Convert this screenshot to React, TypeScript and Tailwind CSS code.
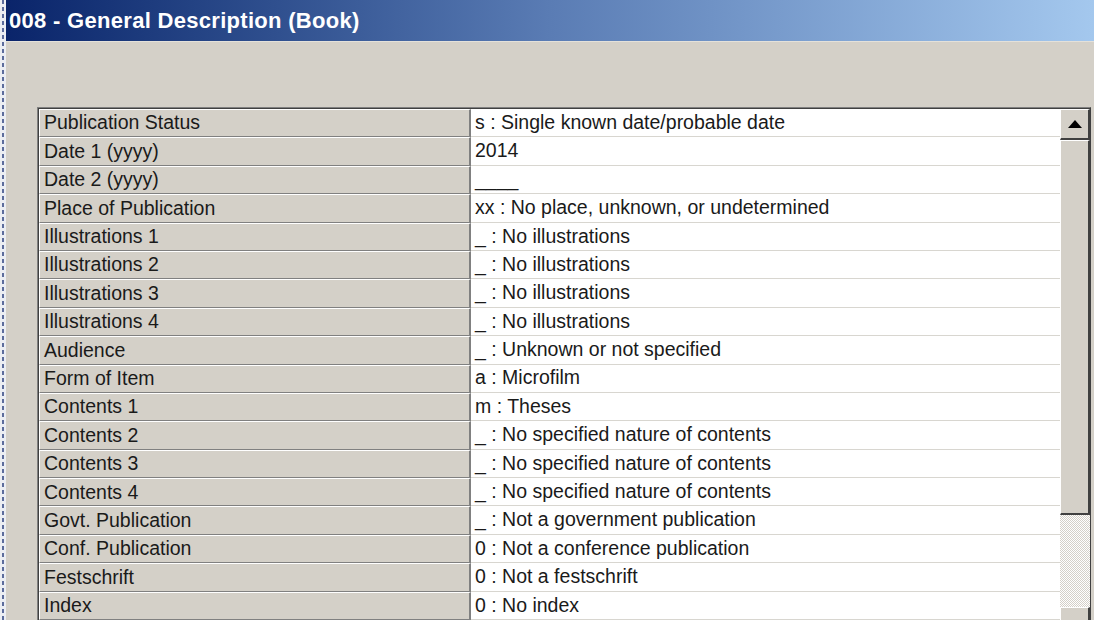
import React from "react";

const rows: [string, string][] = [
  ["Publication Status", "s : Single known date/probable date"],
  ["Date 1 (yyyy)", "2014"],
  ["Date 2 (yyyy)", "____"],
  ["Place of Publication", "xx : No place, unknown, or undetermined"],
  ["Illustrations 1", "_ : No illustrations"],
  ["Illustrations 2", "_ : No illustrations"],
  ["Illustrations 3", "_ : No illustrations"],
  ["Illustrations 4", "_ : No illustrations"],
  ["Audience", "_ : Unknown or not specified"],
  ["Form of Item", "a : Microfilm"],
  ["Contents 1", "m : Theses"],
  ["Contents 2", "_ : No specified nature of contents"],
  ["Contents 3", "_ : No specified nature of contents"],
  ["Contents 4", "_ : No specified nature of contents"],
  ["Govt. Publication", "_ : Not a government publication"],
  ["Conf. Publication", "0 : Not a conference publication"],
  ["Festschrift", "0 : Not a festschrift"],
  ["Index", "0 : No index"],
];

const Arrow = ({ up }: { up?: boolean }) => (
  <svg width="14" height="8" viewBox="0 0 14 8">
    <path d={up ? "M7 0 L14 8 L0 8 Z" : "M0 0 L14 0 L7 8 Z"} fill="#000" />
  </svg>
);

const Scrollbar = () => (
  <div className="flex w-[30px] shrink-0 flex-col">
    <div className="flex h-[31px] shrink-0 items-center justify-center border-t border-l border-r-2 border-b-2 border-t-white border-l-white border-r-[#404040] border-b-[#404040] bg-[#d4d0c8]">
      <Arrow up />
    </div>
    <div className="h-[375px] shrink-0 border-t border-l border-r-2 border-b-2 border-t-white border-l-white border-r-[#404040] border-b-[#404040] bg-[#d4d0c8]" />
    <div className="h-[92px] shrink-0 bg-[repeating-conic-gradient(#d4d0c8_0_25%,#ffffff_0_50%)] bg-size-[2px_2px]" />
    <div className="flex h-[31px] shrink-0 items-end justify-center border-t border-l border-r-2 border-t-white border-l-white border-r-[#404040] bg-[#d4d0c8]">
      <Arrow />
    </div>
  </div>
);

export default function App() {
  return (
    <div className="flex h-[620px] w-[1094px] overflow-hidden bg-[#d4d0c8] font-['Liberation_Sans',Arial,sans-serif] text-[#1a1a1a]">
      <div className="flex w-[6px] shrink-0 justify-center bg-[#eceef3]">
        <div className="w-[2px] bg-[repeating-linear-gradient(to_bottom,#5c6c9c_0_4px,transparent_4px_7px)]" />
      </div>
      <div className="flex min-w-0 flex-1 flex-col">
        <div className="flex h-[41px] shrink-0 items-center bg-linear-to-r from-[#0a246a] via-[#5a7cb4] to-[#a4c8ee] pl-[3px] text-[22px] font-bold tracking-[0.3px] text-white">
          008 - General Description (Book)
        </div>
        <div className="h-px shrink-0 bg-[#e4e1da]" />
        <div className="pt-[65px] pl-[31px] pr-[3px]">
          <div className="border-t border-l border-r border-t-[#808080] border-l-[#808080] border-r-[#404040]">
            <div className="flex border-t border-l border-[#404040]">
              <div className="flex min-w-0 flex-1 flex-col">
                {rows.map(([label, value]) => (
                  <div key={label} className="flex h-[28.4px] shrink-0 text-[19.5px] leading-none">
                    <div className="flex w-[432px] shrink-0 items-center border-t border-l border-r-2 border-b border-t-white border-l-white border-r-[#808080] border-b-[#808080] bg-[#d4d0c8] pl-[4px]">
                      {label}
                    </div>
                    <div className="flex flex-1 items-center border-b border-[#d8d6d0] bg-white pl-[4px]">
                      {value}
                    </div>
                  </div>
                ))}
              </div>
              <Scrollbar />
            </div>
          </div>
        </div>
      </div>
    </div>
  );
}
